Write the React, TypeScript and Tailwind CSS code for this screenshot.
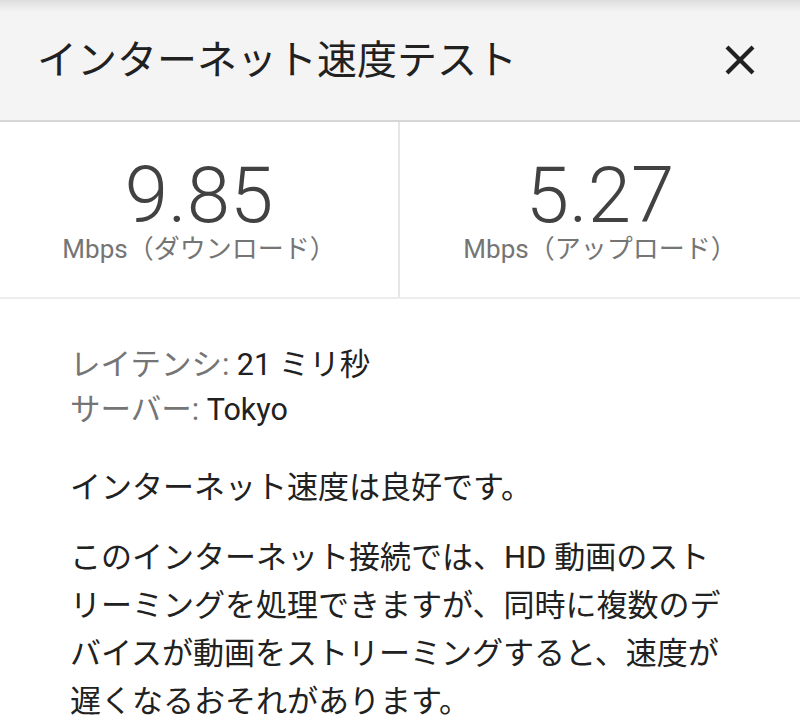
const font = { fontFamily: "Roboto, 'Noto Sans CJK JP', sans-serif" };

function CloseIcon() {
  return (
    <svg width="32" height="32" viewBox="0 0 32 32" className="text-[#212121]">
      <path d="M3 3 L29 29 M29 3 L3 29" stroke="currentColor" strokeWidth="4.2" strokeLinecap="butt" />
    </svg>
  );
}

function Stat({ value, label }: { value: string; label: string }) {
  return (
    <div className="flex flex-col items-center pt-[35px]">
      <div className="text-[78px] font-light leading-none text-[#424242]">{value}</div>
      <div className="text-[26px] leading-[28px] text-[#757575]">{label}</div>
    </div>
  );
}

export default function App() {
  return (
    <div className="h-[727px] w-[800px] overflow-hidden bg-white" style={font}>
      <header className="flex h-[122px] items-center justify-between border-b-2 border-[#d6d6d6] bg-[linear-gradient(to_bottom,#dedede,#f4f4f4_12px)] pl-[37px] pr-[44px]">
        <h1 className="pt-[1px] text-[40px] font-normal text-[#212121]">インターネット速度テスト</h1>
        <CloseIcon />
      </header>

      <section className="grid h-[177px] grid-cols-2 border-b-2 border-[#ececec]">
        <div className="border-r-2 border-[#e6e6e6]">
          <Stat value="9.85" label="Mbps（ダウンロード）" />
        </div>
        <Stat value="5.27" label="Mbps（アップロード）" />
      </section>

      <section className="pl-[70px] pr-[64px] pt-[43px] text-[30.5px] text-[#212121] [line-break:strict]">
        <div className="leading-[45px]">
          <span className="text-[#757575]">レイテンシ:</span> 21 ミリ秒
        </div>
        <div className="leading-[45px]">
          <span className="text-[#757575]">サーバー:</span> Tokyo
        </div>
        <p className="mt-[33px] text-[31px] leading-[45px]">インターネット速度は良好です。</p>
        <p className="mt-[24px] text-[31px] leading-[48px]">
          このインターネット接続では、HD 動画のストリーミングを処理できますが、同時に複数のデバイスが動画をストリーミングすると、速度が遅くなるおそれがあります。
        </p>
      </section>
    </div>
  );
}
